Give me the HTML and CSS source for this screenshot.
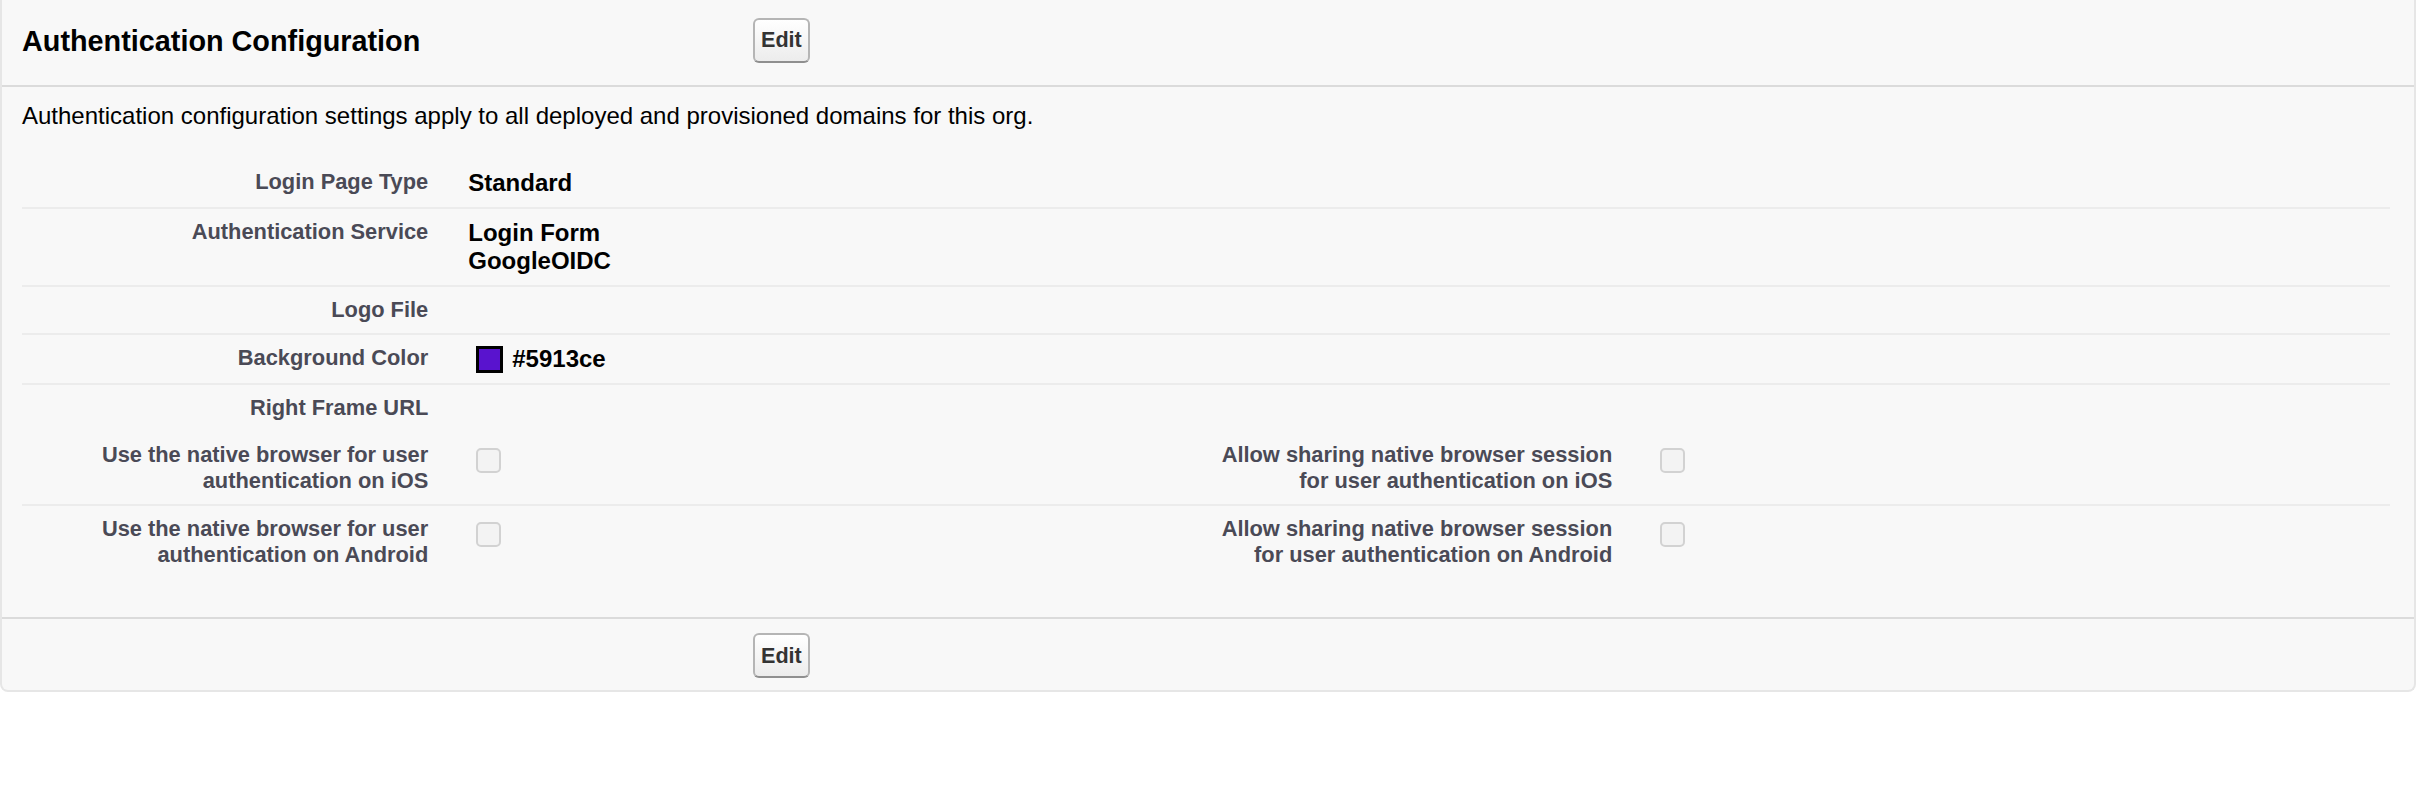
FILE: index.html
```html
<!DOCTYPE html>
<html lang="en">
<head>
<meta charset="utf-8">
<title>Authentication Configuration</title>
<link rel="stylesheet" href="styles.css">
</head>
<body>
<div class="panel">
  <div class="panel-header">
    <h2 class="panel-title">Authentication Configuration</h2>
    <button class="btn" type="button">Edit</button>
  </div>
  <div class="panel-body">
    <p class="description">Authentication configuration settings apply to all deployed and provisioned domains for this org.</p>
    <table class="detail">
      <colgroup><col class="c-label"><col class="c-data"><col class="c-label"><col class="c-data"></colgroup>
      <tr>
        <td class="label">Login Page Type</td>
        <td class="data">Standard</td>
        <td class="label"></td><td class="data"></td>
      </tr>
      <tr>
        <td class="label">Authentication Service</td>
        <td class="data">Login Form<br>GoogleOIDC</td>
        <td class="label"></td><td class="data"></td>
      </tr>
      <tr>
        <td class="label">Logo File</td>
        <td class="data"></td>
        <td class="label"></td><td class="data"></td>
      </tr>
      <tr>
        <td class="label">Background Color</td>
        <td class="data"><div class="color-value"><span class="swatch"></span><span>#5913ce</span></div></td>
        <td class="label"></td><td class="data"></td>
      </tr>
      <tr class="last">
        <td class="label">Right Frame URL</td>
        <td class="data"></td>
        <td class="label"></td><td class="data"></td>
      </tr>
    </table>
    <table class="detail detail-next">
      <colgroup><col class="c-label"><col class="c-data"><col class="c-label"><col class="c-data"></colgroup>
      <tr>
        <td class="label">Use the native browser for user authentication on iOS</td>
        <td class="data"><span class="checkbox"></span></td>
        <td class="label">Allow sharing native browser session for user authentication on iOS</td>
        <td class="data"><span class="checkbox"></span></td>
      </tr>
      <tr class="last">
        <td class="label">Use the native browser for user authentication on Android</td>
        <td class="data"><span class="checkbox"></span></td>
        <td class="label">Allow sharing native browser session for user authentication on Android</td>
        <td class="data"><span class="checkbox"></span></td>
      </tr>
    </table>
  </div>
  <div class="panel-footer">
    <button class="btn" type="button">Edit</button>
  </div>
</div>
</body>
</html>
```

FILE: styles.css
```css
html, body {
  margin: 0;
  padding: 0;
  background: #ffffff;
}

body {
  font-family: "Liberation Sans", Arial, Helvetica, sans-serif;
  color: #000000;
}

.panel {
  width: 2416px;
  box-sizing: border-box;
  background: #f8f8f8;
  border: 2px solid #e6e6e6;
  border-top: none;
  border-radius: 0 0 8px 8px;
}

.panel-header {
  display: flex;
  align-items: center;
  height: 87px;
  box-sizing: border-box;
  padding: 0 0 5px 20px;
  border-bottom: 2px solid #dbdbdb;
}

.panel-title {
  width: 731px;
  margin: 0;
  padding-top: 3px;
  font-size: 28.8px;
  font-weight: bold;
  color: #000000;
}

.btn {
  display: inline-flex;
  align-items: center;
  justify-content: center;
  height: 45px;
  box-sizing: border-box;
  padding: 0 6px;
  font-family: "Liberation Sans", Arial, Helvetica, sans-serif;
  font-size: 21.6px;
  font-weight: bold;
  color: #333333;
  background: linear-gradient(#ffffff, #ececec);
  border: 2px solid #b5b5b5;
  border-bottom-color: #8f8f8f;
  border-radius: 6px;
}

.panel-body {
  padding: 0 24px 39px 20px;
}

.description {
  margin: 0;
  padding: 15px 0 29px 0;
  font-size: 24px;
}

.detail {
  width: 2368px;
  table-layout: fixed;
  border-collapse: collapse;
  border-spacing: 0;
}

.detail-next {
  margin-top: 1px;
}

.c-label { width: 18%; }
.c-data { width: 32%; }

.detail td {
  vertical-align: top;
  border-bottom: 2px solid #ececec;
  padding: 10px 20px 10px 20px;
}

.detail tr.last td {
  border-bottom: none;
}

.detail td.label {
  text-align: right;
  padding-left: 4px;
  font-size: 21.84px;
  font-weight: bold;
  color: #4a4a56;
}

.detail td.data {
  font-size: 24px;
  font-weight: bold;
  color: #000000;
}

.color-value {
  display: flex;
  align-items: center;
}

.swatch {
  width: 27px;
  height: 27px;
  box-sizing: border-box;
  border: 3px solid #000000;
  background: #5913ce;
  margin: 0 9px 0 8px;
}

.checkbox {
  display: block;
  width: 25px;
  height: 25px;
  box-sizing: border-box;
  margin: 6px 0 0 8px;
  border: 2px solid #d2d2d2;
  border-radius: 5px;
  background: #f3f3f3;
}

.panel-footer {
  border-top: 2px solid #dbdbdb;
  padding: 14px 0 12px 751px;
}
```
